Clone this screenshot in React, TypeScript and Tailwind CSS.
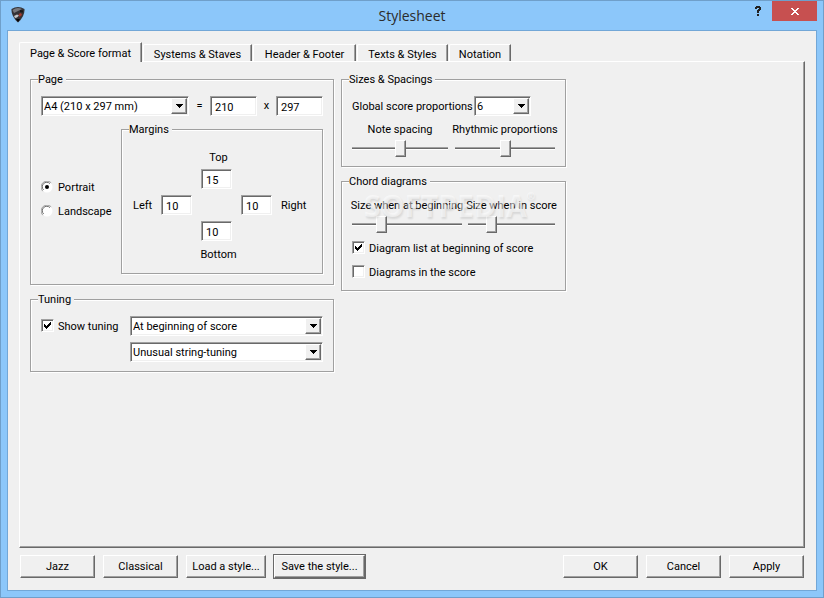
import type { ReactNode } from "react";

const raised = "bg-[#f0f0f0] border border-t-white border-l-white border-r-[#696969] border-b-[#696969] shadow-[inset_-1px_-1px_0_#a0a0a0]";
const sunken = "bg-white border border-t-[#a0a0a0] border-l-[#a0a0a0] border-r-white border-b-white shadow-[inset_1px_1px_0_#696969,inset_-1px_-1px_0_#f0f0f0]";

const tabs = [
  { label: "Systems & Staves", width: "w-[109px]" },
  { label: "Header & Footer", width: "w-[103px]" },
  { label: "Texts & Styles", width: "w-[91px]" },
  { label: "Notation", width: "w-[62px]" },
];

function Group({ title, className = "", children }: { title: string; className?: string; children: ReactNode }) {
  return (
    <fieldset className={`min-w-0 border border-[#a0a0a0] px-[10px] shadow-[inset_1px_1px_0_#fff,1px_1px_0_#fff] ${className}`}>
      <legend className="-ml-[3px] h-[14px] bg-[#f0f0f0] pr-[3px] leading-4">{title}</legend>
      {children}
    </fieldset>
  );
}

function Field({ label, value, className = "" }: { label: string; value: string; className?: string }) {
  return <input type="text" aria-label={label} defaultValue={value} className={`h-5 rounded-none pt-[2px] pl-1 outline-none ${sunken} ${className}`} />;
}

function Dropdown({ label, id, options, className = "" }: { label: string; id?: string; options: string[]; className?: string }) {
  return (
    <div className={`relative h-5 ${className}`}>
      <select id={id} aria-label={label} className={`block h-5 w-full appearance-none rounded-none pt-px pr-5 pl-[2px] outline-none ${sunken}`}>
        {options.map((o) => (
          <option key={o}>{o}</option>
        ))}
      </select>
      <span className={`pointer-events-none absolute top-[2px] right-[2px] bottom-[2px] flex w-4 items-center justify-center ${raised}`}>
        <svg width="7" height="4" viewBox="0 0 7 4" shapeRendering="crispEdges">
          <path d="M0 0h7v1H6v1H5v1H4v1H3V3H2V2H1V1H0z" fill="#000" />
        </svg>
      </span>
    </div>
  );
}

function Check({ label, checked = false }: { label: string; checked?: boolean }) {
  return (
    <label className="flex h-4 items-start gap-1 leading-[18px] whitespace-nowrap">
      <span className="grid pt-px">
        <input type="checkbox" defaultChecked={checked} className={`peer col-start-1 row-start-1 size-[13px] appearance-none ${sunken}`} />
        <svg className="pointer-events-none invisible col-start-1 row-start-1 peer-checked:visible" width="13" height="13" viewBox="0 0 13 13" shapeRendering="crispEdges">
          <path d="M3 5h1v1h1v1h1V6h1V5h1V4h1V3h1v3H9v1H8v1H7v1H6v1H5V9H4V8H3z" fill="#000" />
        </svg>
      </span>
      {label}
    </label>
  );
}

function Radio({ label, checked = false }: { label: string; checked?: boolean }) {
  return (
    <label className="flex h-4 items-start gap-[5px] leading-[18px]">
      <span className="grid pt-[2px]">
        <input type="radio" name="orientation" defaultChecked={checked} className="peer col-start-1 row-start-1 size-3 appearance-none" />
        <svg className="pointer-events-none col-start-1 row-start-1 [&>circle]:opacity-0 peer-checked:[&>circle]:opacity-100" width="12" height="12" viewBox="0 0 12 12">
          <path d="M6 0.5a5.5 5.5 0 1 0 0 11a5.5 5.5 0 0 0 0-11" fill="#fff" />
          <path d="M1.8 10.2A5.5 5.5 0 0 1 10.2 1.8" fill="none" stroke="#a0a0a0" />
          <path d="M2.6 9A4.5 4.5 0 0 1 9 2.6" fill="none" stroke="#696969" />
          <circle cx="6" cy="6" r="2" fill="#000" />
        </svg>
      </span>
      {label}
    </label>
  );
}

function Slider({ label, value }: { label: string; value: number }) {
  return (
    <label className="flex min-w-0 flex-col items-center gap-1 whitespace-nowrap">
      <span className="h-[14px] leading-4">{label}</span>
      <input
        type="range"
        defaultValue={value}
        className="h-[17px] w-full appearance-none bg-transparent [&::-webkit-slider-runnable-track]:h-[3px] [&::-webkit-slider-runnable-track]:border-t [&::-webkit-slider-runnable-track]:border-b [&::-webkit-slider-runnable-track]:border-t-[#a0a0a0] [&::-webkit-slider-runnable-track]:border-b-white [&::-webkit-slider-runnable-track]:bg-[#696969] [&::-webkit-slider-thumb]:-mt-2 [&::-webkit-slider-thumb]:h-[17px] [&::-webkit-slider-thumb]:w-[11px] [&::-webkit-slider-thumb]:appearance-none [&::-webkit-slider-thumb]:border [&::-webkit-slider-thumb]:border-t-white [&::-webkit-slider-thumb]:border-l-white [&::-webkit-slider-thumb]:border-r-[#696969] [&::-webkit-slider-thumb]:border-b-[#696969] [&::-webkit-slider-thumb]:bg-[#f0f0f0] [&::-webkit-slider-thumb]:shadow-[inset_-1px_-1px_0_#a0a0a0]"
      />
    </label>
  );
}

function PushButton({ children, className = "w-[75px]" }: { children: ReactNode; className?: string }) {
  return <button className={`h-[23px] pt-px whitespace-nowrap ${raised} ${className}`}>{children}</button>;
}

function AppIcon() {
  return (
    <svg width="16" height="18" viewBox="0 0 16 18">
      <path d="M1.500 3Q8-1 14.500 3Q15 10 8 16.500Q1 10 1.500 3z" fill="#343236" />
      <path d="M2.500 4Q7 0.500 12 3L8 5L4 7z" fill="#77777c" />
      <path d="M4 10l3-1.500 2 1-2 2-2 .5z" fill="#c5c5c8" />
      <path d="M8.500 8l2.500-1 1 2-2.500 2z" fill="#a43a30" />
      <path d="M10 4l3 .5v2l-3-.5z" fill="#17161a" />
      <path d="M6 13h4l-2 3z" fill="#050505" />
    </svg>
  );
}

function TitleBar() {
  return (
    <header className="grid h-[29px] grid-cols-[1fr_auto_1fr] items-start px-[6px]">
      <div className="pt-[5px] pl-[3px]">
        <AppIcon />
      </div>
      <h1 className="font-['Open_Sans',sans-serif] text-[14px] leading-[29px] text-[#2b2b2b]">Stylesheet</h1>
      <div className="flex justify-end">
        <button aria-label="Help" className="flex h-5 w-7 items-center justify-center">
          <svg width="6" height="10" viewBox="0 0 6 10" fill="#222" shapeRendering="crispEdges">
            <path d="M1 0h4v1h1v3H5v1H4v2H2V4h1V3h1V2H2v1H0V1h1zM2 8h2v2H2z" />
          </svg>
        </button>
        <button aria-label="Close" className="flex h-5 w-[45px] items-center justify-center bg-[#c75050]">
          <svg width="8" height="7" viewBox="0 0 8 7" fill="#fff" shapeRendering="crispEdges">
            <path d="M0 0h2v1h1v1h2V1h1V0h2v1H7v1H6v1H5v1h1v1h1v1h1v1H6V6H5V5H3v1H2v1H0V6h1V5h1V4h1V3H2V2H1V1H0z" />
          </svg>
        </button>
      </div>
    </header>
  );
}

function PageGroup() {
  return (
    <Group title="Page">
      <div className="flex items-center pt-[10px]">
        <Dropdown label="Paper size" options={["A4 (210 x 297 mm)"]} className="w-[148px]" />
        <span className="w-[21px] text-center">=</span>
        <Field label="Page width" value="210" className="w-[47px]" />
        <span className="w-[19px] text-center">x</span>
        <Field label="Page height" value="297" className="w-[47px]" />
      </div>
      <div className="flex pt-[6px] pb-[10px]">
        <div className="flex w-20 flex-col justify-center gap-2 pt-[2px]">
          <Radio label="Portrait" checked />
          <Radio label="Landscape" />
        </div>
        <Group title="Margins" className="flex-1">
          <div className="grid grid-cols-[20px_32px_32px_32px_auto] items-center justify-start gap-x-2 gap-y-[6px] pt-[13px] pb-3 pl-px leading-[18px]">
            <span className="col-start-3 h-[14px] justify-self-center pl-[3px]">Top</span>
            <Field label="Top" value="15" className="col-start-3 row-start-2 w-[31px]" />
            <span className="row-start-3 h-4">Left</span>
            <Field label="Left" value="10" className="row-start-3 w-[31px]" />
            <Field label="Right" value="10" className="col-start-4 row-start-3 w-[31px]" />
            <span className="col-start-5 row-start-3 h-4">Right</span>
            <Field label="Bottom" value="10" className="col-start-3 row-start-4 w-[31px]" />
            <span className="col-start-3 row-start-5 h-[14px] justify-self-center pl-[3px] leading-4">Bottom</span>
          </div>
        </Group>
      </div>
    </Group>
  );
}

function TuningGroup() {
  return (
    <Group title="Tuning">
      <div className="grid grid-cols-[89px_1fr] items-center gap-y-[6px] pt-[10px] pb-[9px]">
        <Check label="Show tuning" checked />
        <Dropdown label="Tuning position" options={["At beginning of score"]} />
        <Dropdown label="Tuning kind" options={["Unusual string-tuning"]} className="col-start-2" />
      </div>
    </Group>
  );
}

function SizesGroup() {
  return (
    <Group title="Sizes & Spacings">
      <div className="flex items-center justify-between pt-[10px] pr-6 whitespace-nowrap">
        <label htmlFor="proportions" className="h-4 leading-[18px]">Global score proportions</label>
        <Dropdown id="proportions" label="Global score proportions" options={["6"]} className="w-[57px]" />
      </div>
      <div className="grid grid-cols-[96px_1fr] gap-[7px] pt-[6px] pb-[9px]">
        <Slider label="Note spacing" value={50} />
        <Slider label="Rhythmic proportions" value={50} />
      </div>
    </Group>
  );
}

function ChordGroup() {
  return (
    <Group title="Chord diagrams" className="relative">
      <div className="grid grid-cols-[110px_1fr] gap-[6px] pt-[10px]">
        <Slider label="Size when at beginning" value={24} />
        <Slider label="Size when in score" value={24} />
      </div>
      <div className="flex flex-col gap-2 pt-[7px] pb-[10px]">
        <Check label="Diagram list at beginning of score" checked />
        <Check label="Diagrams in the score" />
      </div>
      <div className="pointer-events-none absolute top-[2px] left-[22px] flex font-['Open_Sans',sans-serif] text-[30px] leading-8 font-bold text-white/50 [text-shadow:1px_2px_2px_rgba(0,0,0,0.1)]">
        SOFTPEDIA<span className="text-[10px] leading-3">®</span>
      </div>
    </Group>
  );
}

export default function App() {
  return (
    <main className="flex min-h-screen flex-col border border-[#6f9fca] bg-[#8cc7fa] font-[Roboto,sans-serif] text-[11px] leading-4 text-black">
      <TitleBar />
      <div className="mx-[6px] mb-[6px] flex flex-1 flex-col border border-[#72a7d7] bg-[#f0f0f0] px-[11px] pt-[11px] pb-3">
        <nav role="tablist" className="relative -mb-px flex items-end gap-px">
          <button role="tab" aria-selected="true" className="h-5 w-[123px] rounded-tl-[2px] border border-t-white border-r-[#696969] border-b-0 border-l-white bg-[#f0f0f0] pt-[2px] shadow-[inset_-1px_0_0_#a0a0a0]">
            Page &amp; Score format
          </button>
          {tabs.map((t) => (
            <button key={t.label} role="tab" aria-selected="false" className={`mb-px h-[17px] rounded-tl-[2px] border border-b-0 border-t-white border-r-[#696969] border-l-white pt-[2px] whitespace-nowrap shadow-[inset_-1px_0_0_#a0a0a0] ${t.width}`}>
              {t.label}
            </button>
          ))}
        </nav>
        <section className={`flex flex-1 items-start gap-[7px] pt-[10px] pb-4 pl-[10px] ${raised}`}>
          <div className="flex w-[304px] flex-col gap-[7px]">
            <PageGroup />
            <TuningGroup />
          </div>
          <div className="flex w-[225px] flex-col gap-[7px]">
            <SizesGroup />
            <ChordGroup />
          </div>
        </section>
        <footer className="flex items-center justify-between px-px pt-[7px]">
          <div className="flex items-center gap-2">
            <PushButton>Jazz</PushButton>
            <PushButton>Classical</PushButton>
            <PushButton className="w-20">Load a style...</PushButton>
            <PushButton className="w-[91px] outline outline-[#696969]">Save the style...</PushButton>
          </div>
          <div className="flex gap-2">
            <PushButton>OK</PushButton>
            <PushButton>Cancel</PushButton>
            <PushButton>Apply</PushButton>
          </div>
        </footer>
      </div>
    </main>
  );
}
